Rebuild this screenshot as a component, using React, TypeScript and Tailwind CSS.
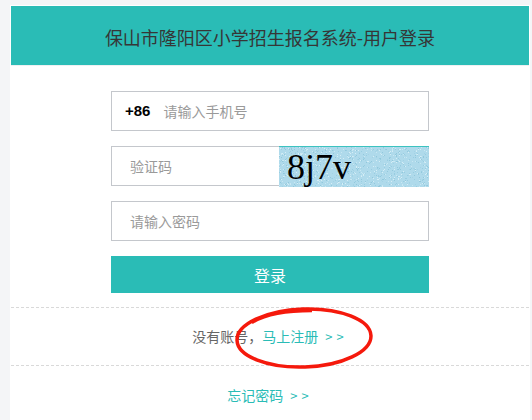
import React from "react";

// deterministic speckles for the captcha picture
const speckles = (() => {
  const dots: { x: number; y: number; c: string }[] = [];
  let seed = 7;
  const rnd = () => {
    seed = (seed * 9301 + 49297) % 233280;
    return seed / 233280;
  };
  const colors = ["#98cde1", "#c9e8f3", "#a3d3e5", "#d6eef6", "#92c8dc"];
  for (let i = 0; i < 1100; i++) {
    dots.push({
      x: Math.floor(rnd() * 150),
      y: Math.floor(rnd() * 41),
      c: colors[Math.floor(rnd() * colors.length)],
    });
  }
  return dots;
})();

const Captcha = () => (
  <div className="relative h-[41px] w-[150px] shrink-0 overflow-hidden border-t border-[#3cc3c0] bg-[#afdaeb]">
    <svg className="absolute inset-0" width="150" height="41">
      {speckles.map((d, i) => (
        <rect key={i} x={d.x} y={d.y} width="1" height="1" fill={d.c} />
      ))}
    </svg>
    <span className="relative block pl-[8px] pt-[2px] font-['Liberation_Serif',serif] text-[36px] leading-none text-black">
      8j7v
    </span>
  </div>
);

const Arrows = () => (
  <span className="ml-[7px] text-[13px] tracking-[4px]">&gt;&gt;</span>
);

const App = () => {
  return (
    <div className="min-h-[420px] bg-[#f4f5f7] pl-[10px] pt-[5px] font-['Noto_Sans_CJK_SC',sans-serif]">
      <div className="relative min-h-[415px] w-[520px] bg-white p-[1px]">
        <div className="flex h-[59px] items-center justify-center pt-[3px] text-[18px] text-[#363636] bg-[#2abcb6]">
          保山市隆阳区小学招生报名系统-用户登录
        </div>
        <div className="border-t border-[#eef0f2]" />

        <div className="flex flex-col items-center gap-[15px] pt-[25px]">
          <div className="flex h-[40px] w-[318px] items-center border border-[#c4c7cc] pl-[13px]">
            <span className="font-['Liberation_Sans',sans-serif] text-[15px] font-bold text-black">
              +86
            </span>
            <input
              className="ml-[13px] w-full bg-transparent text-[14px] text-[#333] outline-none placeholder:text-[#9a9a9a]"
              placeholder="请输入手机号"
            />
          </div>

          <div className="flex h-[40px] w-[318px] items-start">
            <input
              className="h-[40px] w-[168px] border border-r-0 border-[#c4c7cc] bg-transparent pl-[18px] text-[14px] text-[#333] outline-none placeholder:text-[#9a9a9a]"
              placeholder="验证码"
            />
            <Captcha />
          </div>

          <input
            type="password"
            className="h-[40px] w-[318px] border border-[#c4c7cc] bg-transparent pl-[18px] text-[14px] text-[#333] outline-none placeholder:text-[#9a9a9a]"
            placeholder="请输入密码"
          />

          <button
            type="button"
            className="h-[37px] w-[318px] text-[16px] text-white bg-[#2abcb6]"
          >
            登录
          </button>
        </div>

        <div className="mt-[14px] border-t border-dashed border-[#d9d9d9]" />
        <div className="flex h-[57px] items-center justify-center text-[14px] text-[#666]">
          没有账号，
          <a className="text-[#2abcb6]">
            马上注册
            <Arrows />
          </a>
        </div>
        <div className="border-t border-dashed border-[#d9d9d9]" />
        <div className="flex h-[58px] items-center justify-center text-[14px]">
          <a className="text-[#2abcb6]">
            忘记密码
            <Arrows />
          </a>
        </div>

        {/* red hand-drawn mark */}
        <svg
          className="pointer-events-none absolute left-[220px] top-[301px]"
          width="150"
          height="70"
        >
          <ellipse
            cx="74"
            cy="32"
            rx="67"
            ry="29"
            fill="none"
            stroke="#f5190c"
            strokeWidth="3.5"
            transform="rotate(-2 74 32)"
          />
          <path
            d="M22 17 C 36 8, 60 5, 82 5"
            fill="none"
            stroke="#f5190c"
            strokeWidth="2.5"
          />
        </svg>
      </div>
    </div>
  );
};

export default App;
